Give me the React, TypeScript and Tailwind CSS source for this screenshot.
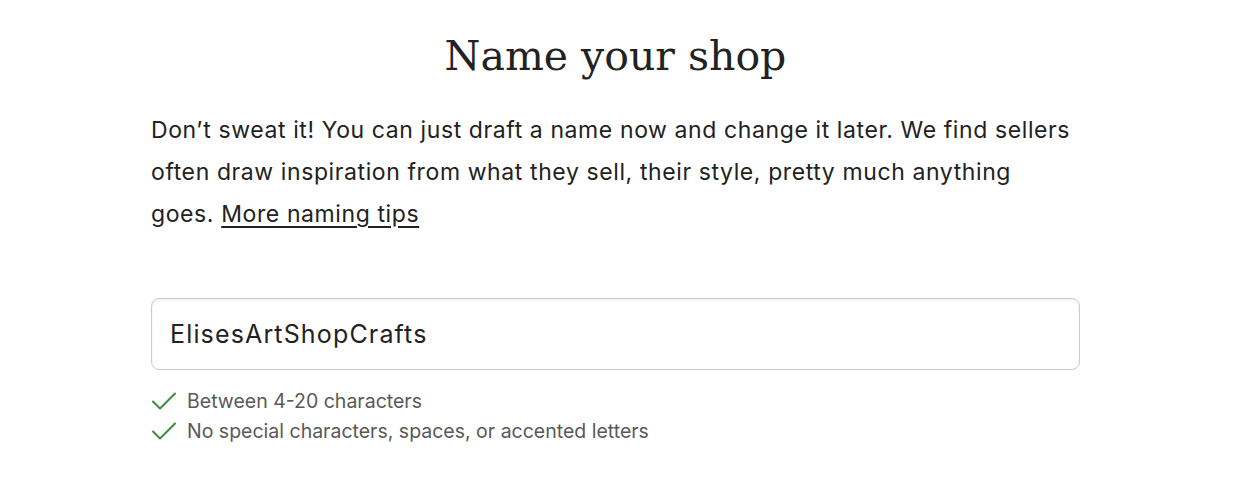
const rules = [
  'Between 4-20 characters',
  'No special characters, spaces, or accented letters',
];

const Check = () => (
  <svg width="26" height="20" viewBox="0 0 26 20" fill="none" className="shrink-0">
    <path d="M2 10.5 L9 17.5 L24 2.5" stroke="#3e8a40" strokeWidth="2" strokeLinecap="round" strokeLinejoin="round" />
  </svg>
);

export default function App() {
  return (
    <div className="min-h-[494px] bg-white text-[#222222]" style={{ fontFamily: 'Inter, "Open Sans", sans-serif' }}>
      <div className="ml-[151px] w-[929px] pt-[27px]">
        <h1
          className="text-center text-[41px] leading-[58px] font-light text-[#222222]"
          style={{ fontFamily: '"DejaVu Serif", "Liberation Serif", serif' }}
        >
          Name your shop
        </h1>

        <p className="mt-[24px] text-[23px] tracking-[0.6px] leading-[42px] text-[#222222]">
          Don’t sweat it! You can just draft a name now and change it later. We find sellers
          <br />
          often draw inspiration from what they sell, their style, pretty much anything
          <br />
          goes.{' '}
          <a href="#" className="underline underline-offset-4">More naming tips</a>
        </p>

        <div className="mt-[63px] flex h-[72px] items-center rounded-lg border border-[#cccccc] px-[18px] pt-[2px] shadow-[inset_0_1px_3px_rgba(0,0,0,0.08)]">
          <span className="text-[25px] tracking-[1.15px] text-[#222222]">ElisesArtShopCrafts</span>
        </div>

        <ul className="mt-[19px] flex flex-col gap-[6px]">
          {rules.map((rule) => (
            <li key={rule} className="flex items-center gap-[10px] text-[19.5px] leading-[24px] text-[#595959]">
              <Check />
              {rule}
            </li>
          ))}
        </ul>
      </div>
    </div>
  );
}
